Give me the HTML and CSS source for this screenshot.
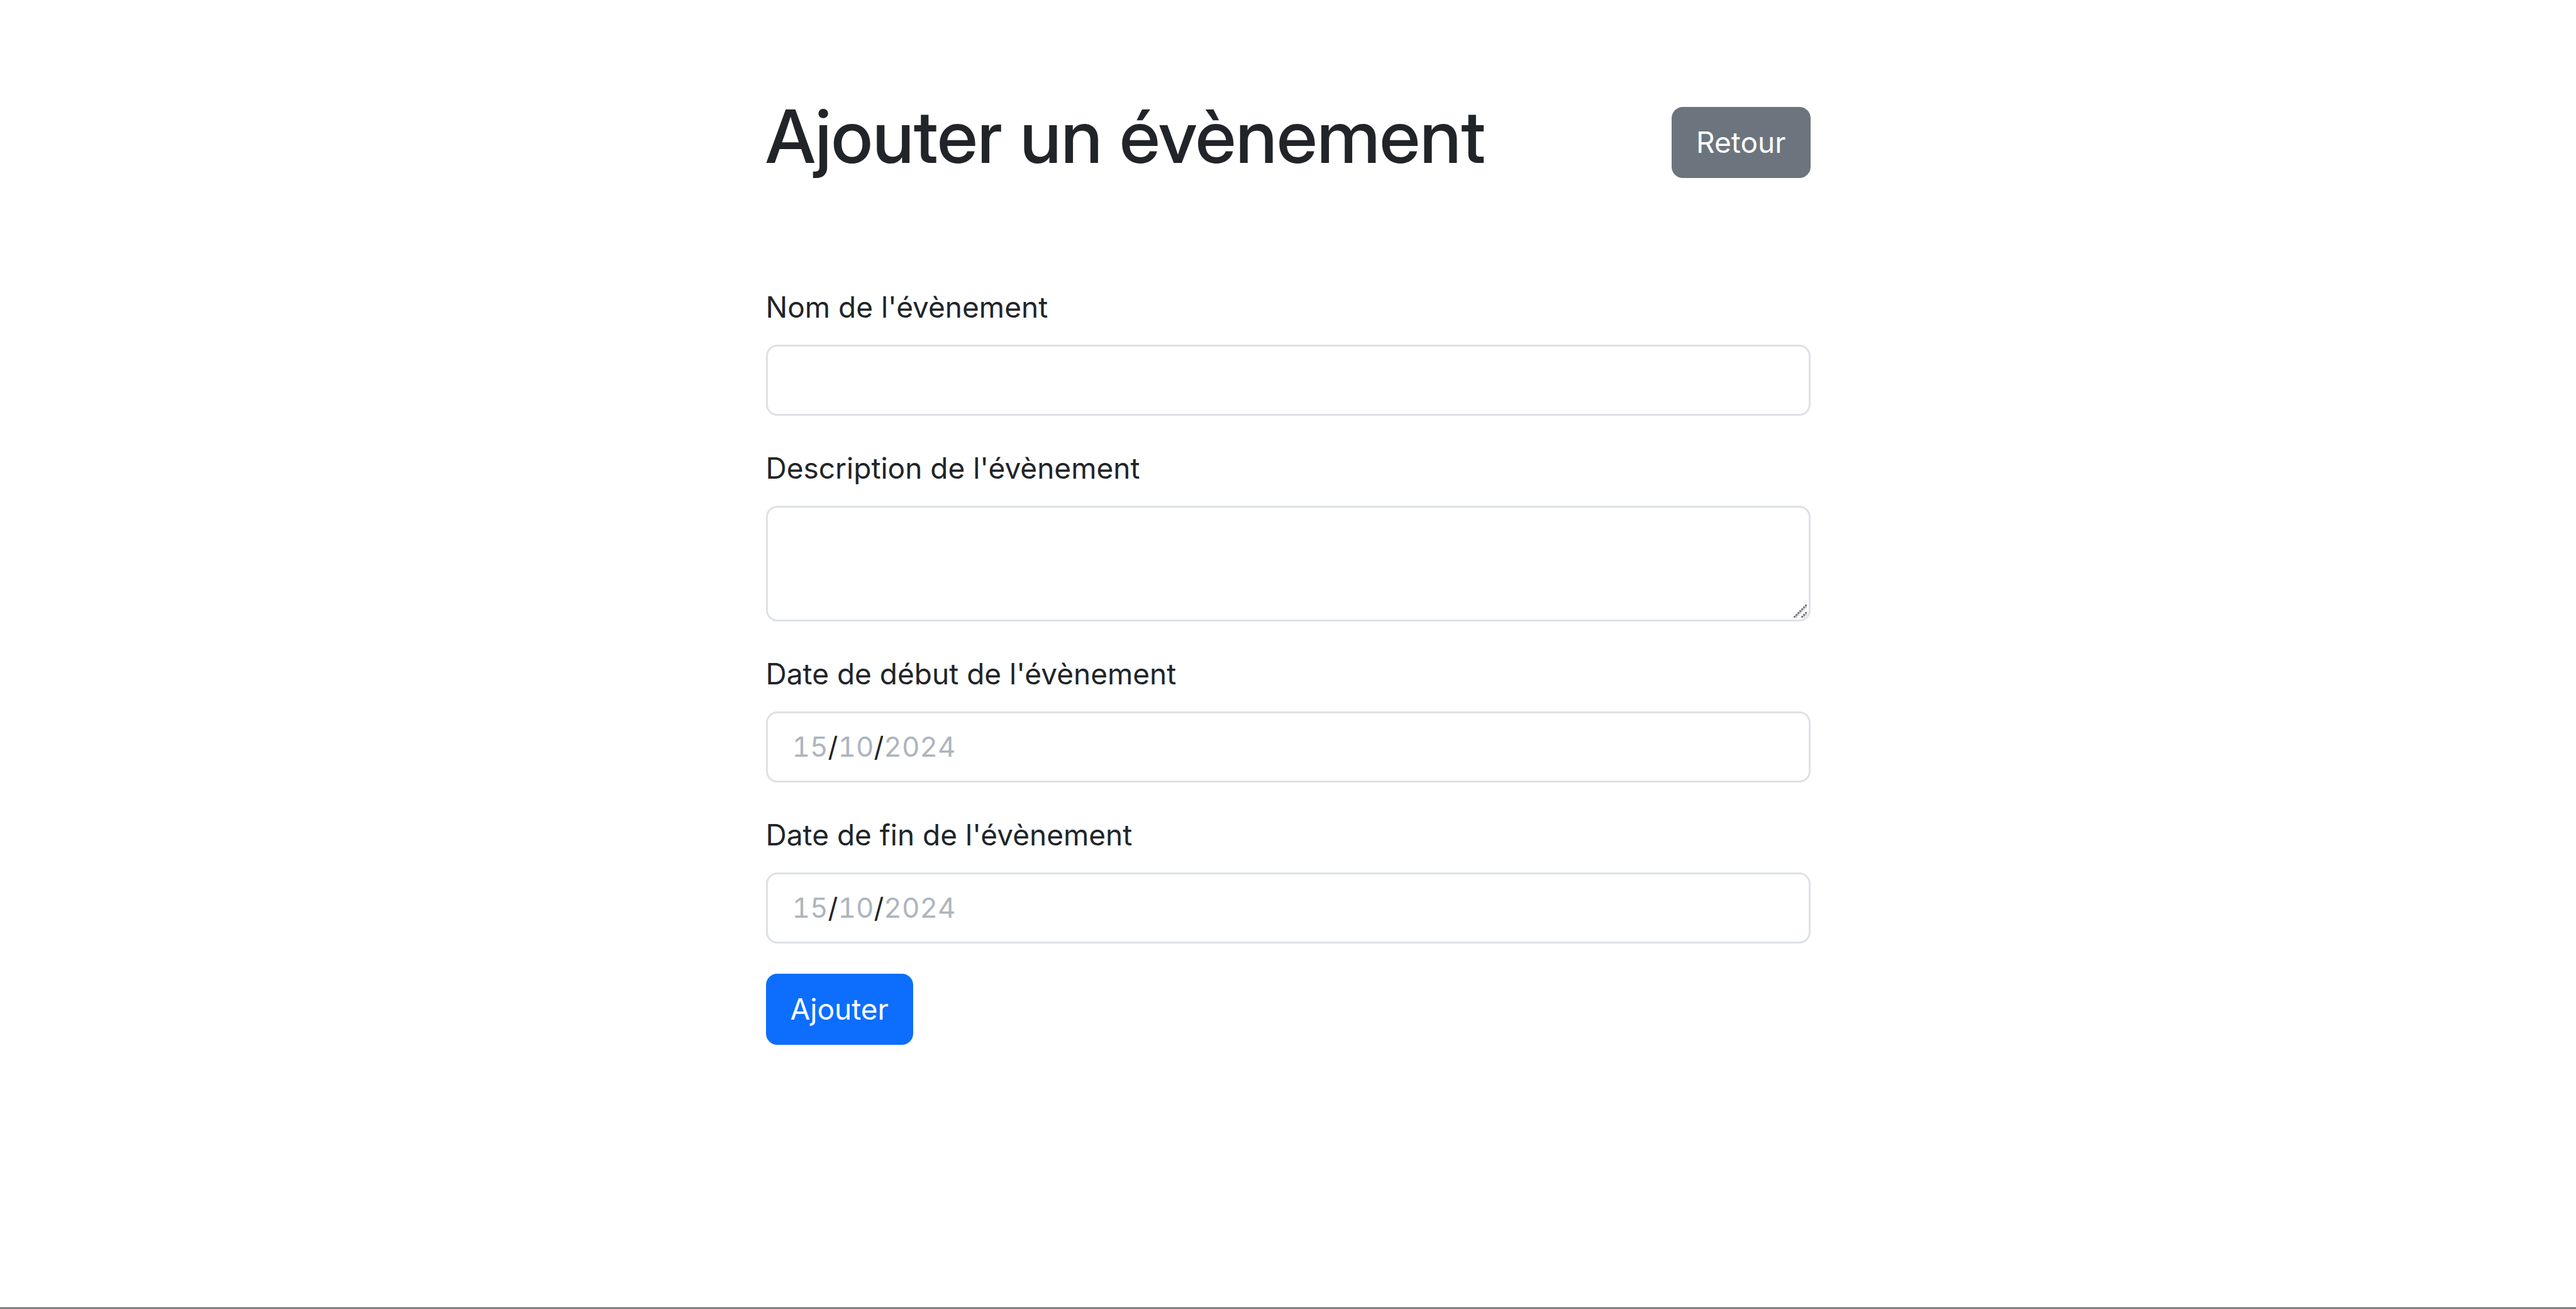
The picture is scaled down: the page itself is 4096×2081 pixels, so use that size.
FILE: index.html
```html
<!DOCTYPE html>
<html lang="fr">
<head>
  <meta charset="utf-8">
  <meta name="viewport" content="width=device-width, initial-scale=1">
  <title>Ajouter un évènement</title>
  <link rel="stylesheet" href="styles.css">
</head>
<body>
  <main class="container">
    <header class="page-header">
      <h1 class="page-title">Ajouter un évènement</h1>
      <button type="button" class="btn btn-secondary">Retour</button>
    </header>
    <form class="event-form">
      <div class="field">
        <label class="form-label" for="name">Nom de l'évènement</label>
        <input class="form-control" type="text" id="name" name="name">
      </div>
      <div class="field">
        <label class="form-label" for="description">Description de l'évènement</label>
        <div class="textarea-wrap">
          <textarea class="form-control form-textarea" id="description" name="description" rows="2"></textarea>
          <svg class="grip" viewBox="0 0 7 7" aria-hidden="true" shape-rendering="crispEdges">
            <path fill="#808080" d="M6 0h1v1H6zM5 1h1v1H5zM4 2h1v1H4zM3 3h1v1H3zM2 4h1v1H2zM1 5h1v1H1zM0 6h1v1H0zM6 4h1v1H6zM5 5h1v1H5zM4 6h1v1H4z"/>
            <path fill="#d0d0d0" d="M6 1h1v1H6zM5 2h1v1H5zM4 3h1v1H4zM3 4h1v1H3zM2 5h1v1H2zM1 6h1v1H1zM6 5h1v1H6zM5 6h1v1H5z"/>
          </svg>
        </div>
      </div>
      <div class="field">
        <label class="form-label" for="start">Date de début de l'évènement</label>
        <input class="form-control form-date" type="date" id="start" name="start" value="2024-10-15">
      </div>
      <div class="field">
        <label class="form-label" for="end">Date de fin de l'évènement</label>
        <input class="form-control form-date" type="date" id="end" name="end" value="2024-10-15">
      </div>
      <button type="submit" class="btn btn-primary">Ajouter</button>
    </form>
  </main>
</body>
</html>
```

FILE: styles.css
```css
*,
*::before,
*::after {
  box-sizing: border-box;
}

body {
  margin: 0;
  min-height: 100vh;
  border-bottom: 3px solid #808080;
  background: #fff;
  color: #212529;
  font-family: Inter, "Liberation Sans", sans-serif;
  font-size: 46px;
  line-height: 71px;
}

.container {
  max-width: 1661px;
  margin: 0 auto;
  padding: 143px 0;
}

.page-header {
  display: flex;
  align-items: center;
  justify-content: space-between;
  margin-bottom: 143px;
}

.page-title {
  margin: 0 0 20px;
  font-family: "Inter Display", Inter, "Liberation Sans", sans-serif;
  font-size: 117px;
  font-weight: 500;
  line-height: 147px;
}

.event-form {
  display: flex;
  flex-direction: column;
  align-items: flex-start;
  gap: 48px;
}

.field {
  display: flex;
  flex-direction: column;
  gap: 24px;
  width: 100%;
}

.form-control {
  display: block;
  width: 100%;
  height: 113px;
  margin: 0;
  padding: 18px 36px;
  border: 3px solid #dee2e6;
  border-radius: 18px;
  background: #fff;
  color: #212529;
  font: inherit;
}

.textarea-wrap {
  position: relative;
}

.form-textarea {
  height: 184px;
  resize: none;
}

.grip {
  position: absolute;
  right: 6px;
  bottom: 6px;
  width: 21px;
  height: 21px;
}

.form-date {
  padding-left: 39px;
  font-size: 44px;
  font-variant-numeric: tabular-nums;
}

/* Day / month / year order, whatever the browser's own order */
.form-date::-webkit-datetime-edit {
  padding: 0;
}

.form-date::-webkit-datetime-edit-fields-wrapper {
  display: inline-grid;
  grid-template-columns: repeat(5, max-content);
  padding: 0;
}

.form-date::-webkit-datetime-edit-day-field,
.form-date::-webkit-datetime-edit-month-field,
.form-date::-webkit-datetime-edit-year-field {
  grid-row: 1;
  padding: 0;
  color: #adb5bd;
}

.form-date::-webkit-datetime-edit-day-field {
  grid-column: 1;
}

.form-date::-webkit-datetime-edit-month-field {
  grid-column: 3;
}

.form-date::-webkit-datetime-edit-year-field {
  grid-column: 5;
}

.form-date::-webkit-datetime-edit-text {
  grid-row: 1;
  padding: 0;
}

.form-date::-webkit-calendar-picker-indicator {
  display: none;
}

.btn {
  padding: 18px 36px;
  border: 3px solid transparent;
  border-radius: 18px;
  color: #fff;
  font: inherit;
  cursor: pointer;
}

.btn-primary {
  border-color: #0d6efd;
  background: #0d6efd;
}

.btn-secondary {
  border-color: #6c757d;
  background: #6c757d;
}
```
